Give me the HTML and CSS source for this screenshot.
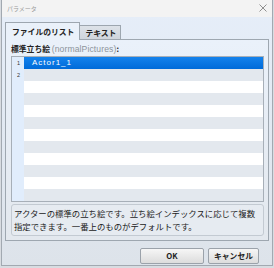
FILE: index.html
```html
<!DOCTYPE html>
<html lang="ja">
<head>
<meta charset="utf-8">
<link rel="stylesheet" href="styles.css">
</head>
<body>
<div class="window">
  <div class="titlebar">
    <span class="title">パラメータ</span>
    <svg class="close" width="8" height="8" viewBox="0 0 8 8"><path d="M0.5 0.5L7.5 7.5M7.5 0.5L0.5 7.5" stroke="#8f8f8f" stroke-width="1"/></svg>
  </div>
  <div class="content">
    <div class="tabs">
      <div class="tab active">ファイルのリスト</div>
      <div class="tab">テキスト</div>
    </div>
    <div class="panel">
      <div class="label"><b>標準立ち絵</b> <span class="key">(normalPictures)</span><b>:</b></div>
      <div class="list">
        <div class="row selected"><span class="num">1</span><span class="cell">Actor1_1</span></div>
        <div class="row alt"><span class="num">2</span><span class="cell"></span></div>
        <div class="row"><span class="num"></span><span class="cell"></span></div>
        <div class="row alt"><span class="num"></span><span class="cell"></span></div>
        <div class="row"><span class="num"></span><span class="cell"></span></div>
        <div class="row alt"><span class="num"></span><span class="cell"></span></div>
        <div class="row"><span class="num"></span><span class="cell"></span></div>
        <div class="row alt"><span class="num"></span><span class="cell"></span></div>
        <div class="row"><span class="num"></span><span class="cell"></span></div>
        <div class="row alt"><span class="num"></span><span class="cell"></span></div>
        <div class="row"><span class="num"></span><span class="cell"></span></div>
        <div class="row alt"><span class="num"></span><span class="cell"></span></div>
      </div>
      <div class="desc">アクターの標準の立ち絵です。立ち絵インデックスに応じて複数<br>指定できます。一番上のものがデフォルトです。</div>
    </div>
    <div class="buttons">
      <button class="btn ok">OK</button>
      <button class="btn cancel">キャンセル</button>
    </div>
  </div>
</div>
</body>
</html>
```

FILE: styles.css
```css
html, body {
  margin: 0;
  padding: 0;
  background: #d8dce1;
  width: 274px;
  height: 268px;
  overflow: hidden;
  font-family: "Noto Sans CJK JP", "Noto Sans", sans-serif;
}

.window {
  margin: 0 1px;
  width: 272px;
  height: 266px;
  box-sizing: border-box;
  border: 1px solid #a2a9b1;
  border-top: none;
  background: linear-gradient(#e6eef9, #dde3ea);
  display: flex;
  flex-direction: column;
}

.titlebar {
  height: 17px;
  flex: none;
  background: #f3f3f3;
  display: flex;
  align-items: center;
  justify-content: space-between;
  padding: 0 5px 0 5px;
}

.title {
  font-size: 6px;
  color: #9a9a9a;
  line-height: 1;
}

.close {
  display: block;
  margin-top: -1px;
}

.content {
  flex: 1;
  display: flex;
  flex-direction: column;
  padding: 5px 3px 0 3px;
}

.tabs {
  display: flex;
  align-items: flex-end;
  height: 17px;
  padding-left: 0;
}

.tab {
  box-sizing: border-box;
  height: 14px;
  padding: 0 4px 0 5px;
  font-size: 7.8px;
  font-weight: bold;
  line-height: 13px;
  color: #222;
  background: linear-gradient(#dde2e8, #cfd5dc);
  border: 1px solid #9da6af;
  border-left: none;
  border-bottom: none;
}

.tab.active {
  height: 18px;
  line-height: 17px;
  padding: 0 5px 0 6px;
  background: #eaf1fa;
  border-left: 1px solid #9da6af;
  margin-bottom: -1px;
  position: relative;
  z-index: 1;
}

.panel {
  border: 1px solid #9ea7b0;
  background: linear-gradient(#eaf1fa, #e3e8ee);
  padding: 3px 4px 4px 5px;
  display: flex;
  flex-direction: column;
}

.label {
  font-size: 7.8px;
  line-height: 12px;
  height: 12px;
  color: #222;
  margin-bottom: 1px;
  white-space: nowrap;
}

.label .key {
  color: #8d949b;
  font-family: "Liberation Sans", sans-serif;
  font-size: 8.6px;
  letter-spacing: 0.1px;
}

.list {
  border: 1px solid #a7afb8;
  background: #fff;
  display: flex;
  flex-direction: column;
}

.row {
  display: flex;
  height: 12px;
  background: #fff;
}

.row.alt .cell {
  background: #e3e8ee;
}

.num {
  width: 12px;
  flex: none;
  background: #e1edfc;
  font-family: "Liberation Sans", sans-serif;
  font-size: 5.5px;
  line-height: 12px;
  color: #333;
  text-align: right;
  padding-right: 4px;
  box-sizing: border-box;
}

.cell {
  flex: 1;
  font-family: "Liberation Sans", sans-serif;
  font-size: 8px;
  line-height: 12px;
  padding-left: 8px;
}

.row.selected .cell {
  background: linear-gradient(#1482ec, #006bd9);
  color: #fff;
  letter-spacing: 1px;
}

.desc {
  margin-top: 2px;
  height: 32px;
  box-sizing: border-box;
  border: 1px solid #c3cad2;
  border-radius: 3px;
  background: #e6ebf1;
  font-size: 8.4px;
  line-height: 13px;
  padding: 2px 0 0 2px;
  color: #222;
  white-space: nowrap;
}

.buttons {
  display: flex;
  justify-content: flex-end;
  gap: 4px;
  margin-top: 7px;
  padding-right: 10px;
}

.btn {
  box-sizing: border-box;
  height: 16px;
  padding: 0;
  margin: 0;
  border: 1px solid #9ba2aa;
  border-radius: 2px;
  background: linear-gradient(#f6f6f6, #dcdcdc);
  font-family: "Noto Sans CJK JP", "Noto Sans", sans-serif;
  font-size: 7.8px;
  font-weight: bold;
  line-height: 14px;
  color: #222;
}

.btn.ok {
  width: 64px;
}

.btn.cancel {
  width: 51px;
}
```
